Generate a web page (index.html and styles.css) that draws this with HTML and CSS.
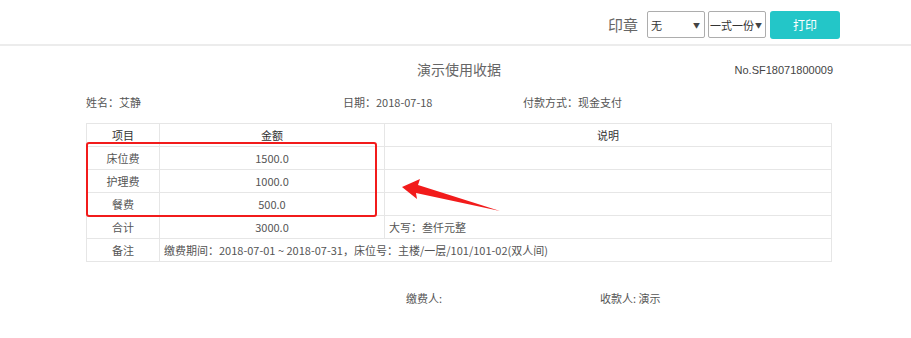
FILE: index.html
```html
<!DOCTYPE html>
<html lang="zh">
<head>
<meta charset="utf-8">
<link rel="stylesheet" href="styles.css">
</head>
<body>
<div class="topbar">
  <span class="seal-label">印章</span>
  <div class="select s1"><span>无</span><span class="caret">▼</span></div>
  <div class="select s2"><span>一式一份</span><span class="caret">▼</span></div>
  <button class="print">打印</button>
</div>
<div class="receipt">
  <div class="title-row">
    <div class="title">演示使用收据</div>
    <div class="no">No.SF18071800009</div>
  </div>
  <div class="info">
    <span>姓名：艾静</span>
    <span>日期：2018-07-18</span>
    <span>付款方式：现金支付</span>
  </div>
  <table class="items">
    <colgroup><col class="c1"><col class="c2"><col class="c3"></colgroup>
    <tr><th>项目</th><th>金额</th><th>说明</th></tr>
    <tr><td>床位费</td><td>1500.0</td><td></td></tr>
    <tr><td>护理费</td><td>1000.0</td><td></td></tr>
    <tr><td>餐费</td><td>500.0</td><td></td></tr>
    <tr><td>合计</td><td>3000.0</td><td class="left">大写：叁仟元整</td></tr>
    <tr><td>备注</td><td colspan="2" class="left">缴费期间：2018-07-01 ~ 2018-07-31，床位号：主楼/一层/101/101-02(双人间)</td></tr>
  </table>
  <div class="sign">
    <span class="payer">缴费人:</span>
    <span class="payee">收款人: 演示</span>
  </div>
</div>
<svg class="annot" width="911" height="338" viewBox="0 0 911 338">
  <rect x="87" y="143" width="289" height="73" rx="2" fill="none" stroke="#f21b1b" stroke-width="2"/>
  <polygon points="402,187 420,179 418,185 500,211 416,193 417,199" fill="#f21b1b"/>
</svg>
</body>
</html>
```
FILE: styles.css
```css
html, body {
  margin: 0;
  padding: 0;
  background: #fff;
  font-family: "Noto Sans CJK SC", "Liberation Sans", sans-serif;
  color: #555;
}
body { position: relative; width: 911px; height: 338px; overflow: hidden; }
.topbar {
  height: 39px;
  padding-top: 5px;
  border-bottom: 2px solid #ececec;
  display: flex;
  align-items: center;
  justify-content: flex-end;
  padding-right: 71px;
  box-sizing: content-box;
}
.seal-label {
  font-size: 15px;
  color: #666;
  margin-right: 9px;
}
.select {
  border: 1px solid #adadad;
  border-radius: 2px;
  display: flex;
  align-items: center;
  justify-content: space-between;
  font-size: 11px;
  color: #333;
  box-sizing: border-box;
  height: 27px;
  width: 58px;
}
.s1 { padding: 0 4px 0 3px; margin-right: 3px; }
.s2 { padding: 0 3px 0 1px; margin-right: 4px; }
.caret { font-size: 7px; color: #444; }
.print {
  width: 70px;
  height: 28px;
  border: none;
  border-radius: 3px;
  background: #23c6c8;
  color: #fff;
  font-family: inherit;
  font-size: 12px;
  padding: 0;
}
.receipt {
  width: 746px;
  margin-left: 86px;
}
.title-row {
  position: relative;
  display: flex;
  justify-content: center;
  padding-top: 12px;
  height: 24px;
}
.title { font-size: 14px; color: #666; line-height: 22px; }
.no {
  position: absolute;
  right: -1px;
  top: 17px;
  font-family: "Liberation Sans", sans-serif;
  font-size: 11px;
  color: #444;
  line-height: 14px;
}
.info {
  display: grid;
  grid-template-columns: 257px 180px 1fr;
  font-size: 11px;
  color: #555;
  margin-top: 12px;
  line-height: 16px;
}
.items {
  margin-top: 13px;
  width: 746px;
  border-collapse: collapse;
  table-layout: fixed;
  font-size: 11px;
  color: #555;
}
.c1 { width: 73px; }
.c2 { width: 225px; }
.items th, .items td {
  border: 1px solid #e6e6e6;
  height: 22px;
  padding: 0;
  text-align: center;
  font-weight: normal;
  line-height: 14px;
}
.items th { color: #333; }
.items td.left { text-align: left; padding-left: 4px; }
.sign {
  display: flex;
  font-size: 11px;
  color: #555;
  margin-top: 28px;
  padding-left: 320px;
}
.payer { width: 194px; }
.annot { position: absolute; left: 0; top: 0; pointer-events: none; }
```
